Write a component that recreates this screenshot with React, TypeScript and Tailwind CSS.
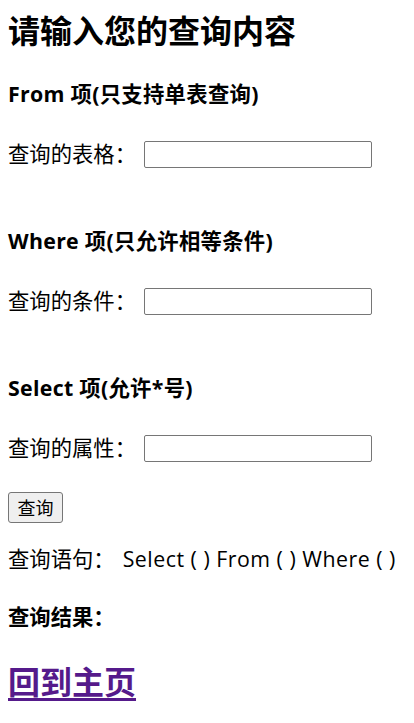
const fieldRows = [
    { title: 'From 项(只支持单表查询)', label: '查询的表格：' },
    { title: 'Where 项(只允许相等条件)', label: '查询的条件：' },
    { title: 'Select 项(允许*号)', label: '查询的属性：' },
];

const QueryField = ({ title, label, first }: { title: string; label: string; first: boolean }) => (
    <div className={first ? 'mt-[28px]' : 'mt-[59px]'}>
        <h4 className="text-[21.33px] font-bold leading-[28px] tracking-[0.3px]">{title}</h4>
        <div className="mt-[32px] flex h-[28px] items-center">
            <span className="w-[136px] text-[21.33px] leading-[28px]">{label}</span>
            <input
                type="text"
                className="h-[27px] w-[228px] rounded-[2px] border border-[#767676] bg-white px-1 text-[18px] outline-none"
            />
        </div>
    </div>
);

export default function App() {
    return (
        <div
            className="min-h-[723px] bg-white pl-2 text-black"
            style={{ fontFamily: '"Open Sans", "Noto Sans CJK SC", sans-serif' }}
        >
            <h2 className="pt-[10px] text-[32px] font-bold leading-[42px]">请输入您的查询内容</h2>

            {fieldRows.map((row, i) => (
                <QueryField key={row.title} title={row.title} label={row.label} first={i === 0} />
            ))}

            <button className="mt-[30px] flex h-[31px] w-[55px] items-center justify-center rounded-[3px] border border-[#767676] bg-[#efefef] text-[18px] leading-[24px]">
                查询
            </button>

            <p className="mt-[22px] text-[21.33px] leading-[28px]">
                查询语句：<span className="ml-[8px] tracking-[0.5px]">Select ( ) From ( ) Where ( )</span>
            </p>

            <h4 className="mt-[30px] text-[21.33px] font-bold leading-[28px]">查询结果：</h4>

            <h2 className="mt-[30px] text-[32px] font-bold leading-[42px]">
                <a href="#" className="text-[#551a8b] underline decoration-[3px] underline-offset-[4px]">
                    回到主页
                </a>
            </h2>
        </div>
    );
}
